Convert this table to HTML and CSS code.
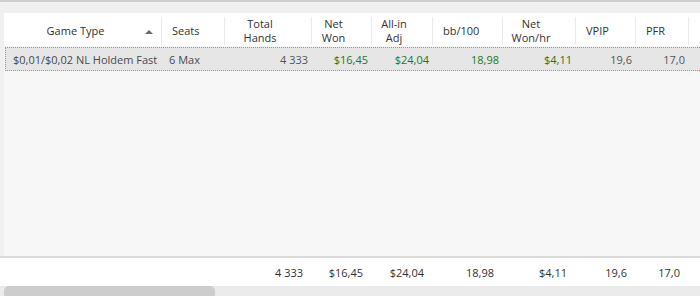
FILE: index.html
```html
<!DOCTYPE html>
<html>
<head>
<meta charset="utf-8">
<link rel="stylesheet" href="styles.css">
</head>
<body>
<div class="app">
  <div class="topbar"></div>
  <div class="grid">
    <div class="header cols">
      <div class="hc c-center first"><span>Game Type</span><span class="sort"></span></div>
      <div class="hc c-left">Seats</div>
      <div class="hc c-center">Total<br>Hands</div>
      <div class="hc c-center">Net<br>Won</div>
      <div class="hc c-center">All-in<br>Adj</div>
      <div class="hc c-left">bb/100</div>
      <div class="hc c-center">Net<br>Won/hr</div>
      <div class="hc c-left">VPIP</div>
      <div class="hc c-left">PFR</div>
      <div class="hc"></div>
    </div>
    <div class="row cols">
      <div class="cell left">$0,01/$0,02 NL Holdem Fast</div>
      <div class="cell left seats">6 Max</div>
      <div class="cell num">4 333</div>
      <div class="cell num green">$16,45</div>
      <div class="cell num green">$24,04</div>
      <div class="cell num green">18,98</div>
      <div class="cell num green">$4,11</div>
      <div class="cell num">19,6</div>
      <div class="cell num">17,0</div>
      <div class="cell"></div>
    </div>
    <div class="empty"></div>
    <div class="footer cols">
      <div class="fc"></div>
      <div class="fc"></div>
      <div class="fc num">4 333</div>
      <div class="fc num">$16,45</div>
      <div class="fc num">$24,04</div>
      <div class="fc num">18,98</div>
      <div class="fc num">$4,11</div>
      <div class="fc num">19,6</div>
      <div class="fc num">17,0</div>
      <div class="fc"></div>
    </div>
  </div>
  <div class="scrollbar"><div class="thumb"></div></div>
</div>
</body>
</html>
```
FILE: styles.css
```css
* { box-sizing: border-box; }
html, body { margin: 0; padding: 0; }
body {
  width: 700px;
  height: 296px;
  overflow: hidden;
  background: #f0f0f0;
  font-family: "Open Sans", "Noto Sans", sans-serif;
  font-size: 11px;
  color: #333;
}
.app {
  display: flex;
  flex-direction: column;
  height: 296px;
}
.topbar {
  height: 13px;
  border-top: 2px solid #cfcfcf;
  background: #f0f0f0;
  flex: none;
}
.grid {
  flex: 1;
  display: flex;
  flex-direction: column;
  margin-left: 4px;
  background: #f7f7f7;
  min-height: 0;
}
.cols {
  display: grid;
  grid-template-columns: 158px 63px 87px 60px 61px 70px 73px 60px 53px 1fr;
}
.header {
  height: 33px;
  background: #fff;
  flex: none;
}
.hc {
  display: flex;
  align-items: center;
  border-right: 1px solid #ebebeb;
  margin: 4px 0 2px;
  line-height: 14px;
  color: #333;
  white-space: nowrap;
}
.hc:last-child { border-right: none; }
.c-center {
  justify-content: center;
  text-align: center;
  padding-right: 16px;
}
.c-left {
  padding-left: 10px;
}
.first {
  position: relative;
  padding-right: 14px;
}
.sort {
  position: absolute;
  right: 8px;
  top: 13px;
  width: 0;
  height: 0;
  border-left: 4px solid transparent;
  border-right: 4px solid transparent;
  border-bottom: 4px solid #6a6a6a;
}
.row {
  height: 24px;
  margin-top: 1px;
  margin-left: 1px;
  background: #e6e6e6;
  border-top: 1px dotted #f07a3a;
  border-bottom: 1px dotted #f07a3a;
  border-left: 1px dotted #f07a3a;
  flex: none;
}
.cell {
  display: flex;
  align-items: center;
  white-space: nowrap;
  color: #4a4a4a;
}
.cell.left { padding-left: 7px; }
.cell.seats { padding-left: 5px; }
.num {
  justify-content: flex-end;
  padding-right: 6px;
}
.cell.num { color: #555; }
.cell.green { color: #1a7a1a; }
.empty { flex: 1; }
.footer {
  flex: none;
  height: 30px;
  border-top: 2px solid #dcdcdc;
  background: #fff;
  margin-left: -4px;
  padding-left: 4px;
}
.fc {
  display: flex;
  align-items: center;
  white-space: nowrap;
  color: #333;
}
.fc.num { padding-right: 9px; }
.scrollbar {
  flex: none;
  height: 10px;
  background: #ebebeb;
  padding-left: 4px;
}
.thumb {
  width: 211px;
  height: 10px;
  background: #cdcdcd;
  border-radius: 5px 5px 0 0;
}
```
